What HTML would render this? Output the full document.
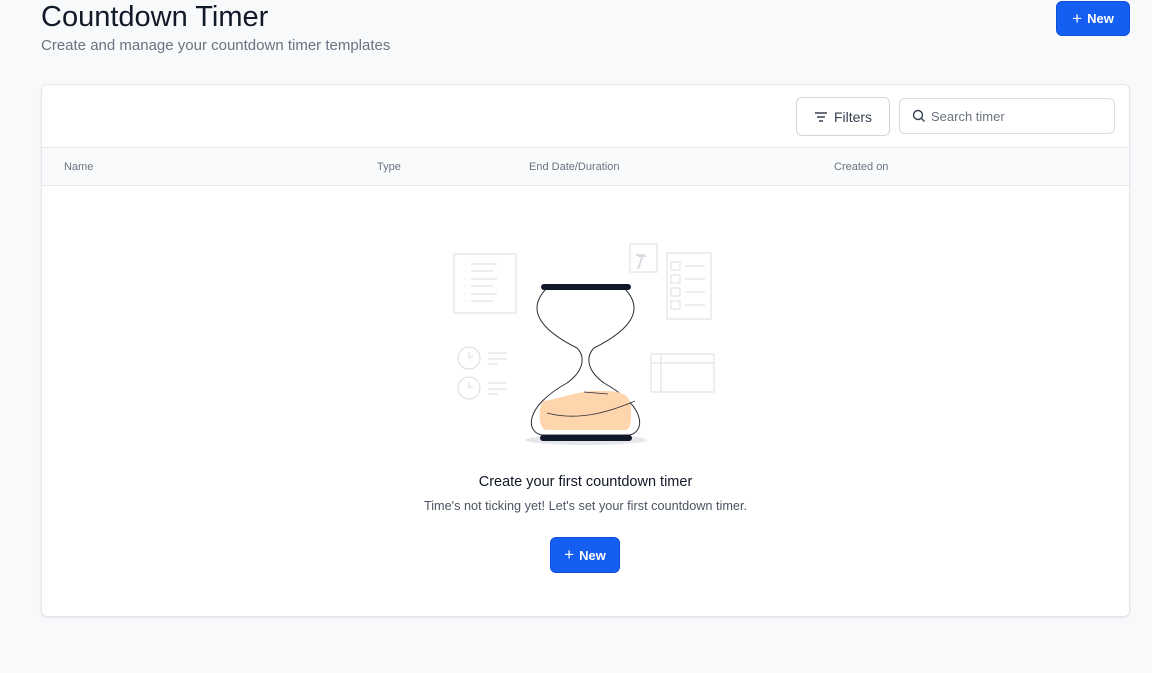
<!DOCTYPE html>
<html><head><style>
*{box-sizing:border-box;margin:0;padding:0}
body{width:1152px;height:673px;background:#f8f9fb;font-family:"Liberation Sans",sans-serif;position:relative;overflow:hidden;color:#111827}
.h1{position:absolute;left:41px;top:1px;font-size:29px;color:#111827}
.sub{position:absolute;left:41px;top:37px;font-size:15px;color:#6b7280}
.btn{position:absolute;background:#145ef2;color:#fff;border-radius:6px;font-weight:bold;font-size:13px;display:flex;align-items:center;justify-content:center;gap:5px;border:1px solid #0f4fd4}
.card{position:absolute;left:41px;top:84px;width:1089px;height:533px;background:#fff;border:1px solid #e5e7eb;border-radius:6px;box-shadow:0 1px 2px rgba(0,0,0,.08)}
.filters{position:absolute;left:754px;top:12px;width:94px;height:39px;border:1px solid #d1d5db;border-radius:6px;display:flex;align-items:center;justify-content:center;gap:6px;font-size:14px;color:#374151}
.search{position:absolute;left:857px;top:13px;width:216px;height:36px;border:1px solid #d9dce1;border-radius:6px;display:flex;align-items:center;padding-left:12px;gap:5px;font-size:13px;color:#6b7280}
.thead{position:absolute;left:0;top:62px;width:1087px;height:39px;background:#f9fafb;border-top:1px solid #e5e7eb;border-bottom:1px solid #e5e7eb;font-size:11px;color:#6b7280}
.thead span{position:absolute;top:13px}
.t1{position:absolute;left:0;width:1087px;text-align:center;top:389px;font-size:14.5px;color:#111827}
.t2{position:absolute;left:0;width:1087px;text-align:center;top:414px;font-size:12.7px;color:#4b5563}
</style></head><body>
<div class="h1">Countdown Timer</div>
<div class="sub">Create and manage your countdown timer templates</div>
<div class="btn" style="left:1056px;top:1px;width:74px;height:35px"><span style="font-weight:normal;font-size:17px">+</span>New</div>
<div class="card">
<div class="filters"><svg width="14" height="12"><path d="M1 2h12M3 6h8M5 10h4" stroke="#374151" stroke-width="1.5"/></svg>Filters</div>
<div class="search"><svg width="14" height="14"><circle cx="6" cy="6" r="4.5" fill="none" stroke="#374151" stroke-width="1.4"/><path d="M9.5 9.5l3 3" stroke="#374151" stroke-width="1.4"/></svg>Search timer</div>
<div class="thead"><span style="left:22px">Name</span><span style="left:335px">Type</span><span style="left:487px">End Date/Duration</span><span style="left:792px">Created on</span></div>
<svg style="position:absolute;left:399px;top:146px" width="290" height="220" viewBox="440 230 290 220">
<g fill="none" stroke="#d9dce2" stroke-width="1">
<rect x="453" y="253" width="62" height="59"/>
<path d="M470 263h26M470 270h22M470 278h26M470 285h22M470 293h26M470 300h22"/>
<path d="M464 263h1M464 270h1M464 278h1M464 285h1M464 293h1M464 300h1"/>
<rect x="629" y="243" width="27" height="28"/>
<path d="M637 268l5-14h-7M637 255h8" stroke-width="2"/>
<rect x="666" y="252" width="44" height="66"/>
<rect x="670" y="261" width="9" height="8"/><rect x="670" y="274" width="9" height="8"/><rect x="670" y="287" width="9" height="8"/><rect x="670" y="300" width="9" height="8"/>
<path d="M684 265h20M684 278h20M684 291h20M684 304h20"/>
<rect x="650" y="353" width="63" height="38"/><path d="M650 362h63M660 353v38"/>
<circle cx="468" cy="357" r="11"/><circle cx="468" cy="387" r="11"/>
<path d="M468 351v6l4-2M468 381v6l4-2M487 352h19M487 358h19M487 363h10M487 382h19M487 388h19M487 393h10"/>
</g>
<ellipse cx="585" cy="439" rx="61" ry="5" fill="#e5e7eb"/>
<path d="M546 287c-20 20-10 40 30 60c8 8 8 22-10 35c-45 25-40 50-25 52h87c15-2 20-27-25-52c-18-13-18-27-10-35c40-20 50-40 30-60" fill="none" stroke="#2b2f38" stroke-width="1"/>
<path d="M542 400c20-3 40-12 60-10c20 0 30 3 28 25c0 10-2 13-5 14h-80c-8-2-8-22-3-29z" fill="#ffd5ad"/>
<path d="M546 412c30 8 60 0 88-12M583 391l24 2" fill="none" stroke="#2b2f38" stroke-width=".8"/>
<rect x="540" y="283" width="90" height="6" rx="3" fill="#111827"/>
<rect x="539" y="434" width="92" height="6" rx="3" fill="#111827"/>
</svg>
<div class="t1">Create your first countdown timer</div>
<div class="t2">Time's not ticking yet! Let's set your first countdown timer.</div>
<div class="btn" style="left:508px;top:452px;width:70px;height:36px"><span style="font-weight:normal;font-size:17px">+</span>New</div>
</div>
</body></html>
